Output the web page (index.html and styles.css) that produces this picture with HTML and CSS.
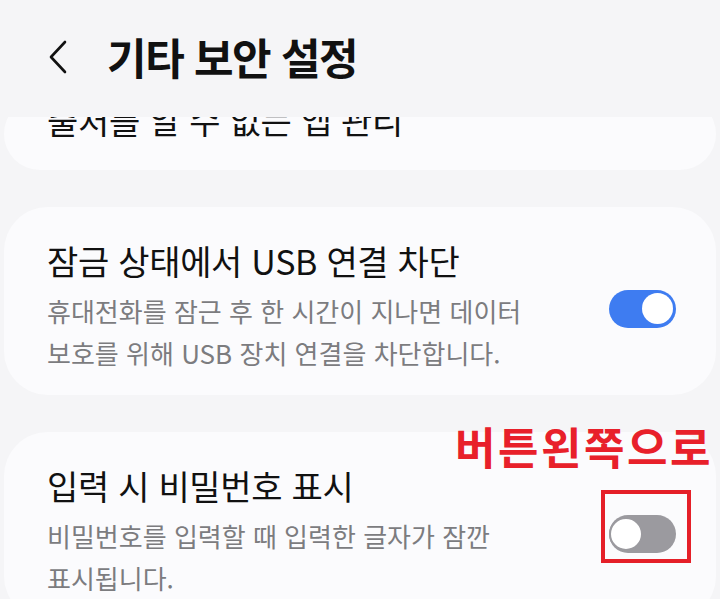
FILE: index.html
```html
<!DOCTYPE html>
<html lang="ko">
<head>
<meta charset="utf-8">
<title>기타 보안 설정</title>
<link rel="stylesheet" href="styles.css">
</head>
<body>
<div class="screen">
  <header class="appbar">
    <svg class="back" width="20" height="34" viewBox="0 0 20 34" aria-hidden="true">
      <path d="M17 2 L3 17 L17 32" fill="none" stroke="#111" stroke-width="2.6" stroke-linecap="round" stroke-linejoin="round"/>
    </svg>
    <h1 class="appbar-title">기타 보안 설정</h1>
  </header>
  <main class="list">
    <div class="peek">
      <section class="card card-peek">
        <div class="card-text">
          <div class="card-title">출처를 알 수 없는 앱 관리</div>
        </div>
      </section>
    </div>
    <section class="card">
      <div class="card-text">
        <div class="card-title">잠금 상태에서 USB 연결 차단</div>
        <div class="card-sub">휴대전화를 잠근 후 한 시간이 지나면 데이터 보호를 위해 USB 장치 연결을 차단합니다.</div>
      </div>
      <div class="switch switch-on"><span class="thumb"></span></div>
    </section>
    <section class="card">
      <div class="card-text">
        <div class="card-title">입력 시 비밀번호 표시</div>
        <div class="card-sub">비밀번호를 입력할 때 입력한 글자가 잠깐 표시됩니다.</div>
      </div>
      <div class="switch switch-off"><span class="thumb"></span></div>
    </section>
  </main>
  <div class="note">버튼왼쪽으로</div>
  <div class="highlight"></div>
</div>
</body>
</html>
```
FILE: styles.css
```css
html, body {
  margin: 0;
  padding: 0;
  background: #f5f5f7;
}
.screen {
  position: relative;
  width: 720px;
  height: 599px;
  overflow: hidden;
  background: #f5f5f7;
  font-family: "Noto Sans CJK KR", "Noto Sans", sans-serif;
  color: #111;
  word-break: keep-all;
}
.appbar {
  height: 117px;
  display: flex;
  align-items: center;
  padding-left: 48px;
  box-sizing: border-box;
}
.back {
  display: block;
  margin-top: -3px;
}
.appbar-title {
  margin: -4px 0 0 39px;
  font-size: 43px;
  font-weight: 700;
  letter-spacing: -1.4px;
  line-height: 1;
}
.list {
  display: flex;
  flex-direction: column;
  gap: 37px;
}
.peek {
  height: 53px;
  overflow: hidden;
  display: flex;
  flex-direction: column;
  justify-content: flex-end;
}
.card {
  margin: 0 4px;
  background: #fbfbfd;
  border-radius: 44px;
  display: flex;
  align-items: center;
  padding: 32px 40px 21px 43px;
}
.card-peek {
  flex: none;
  padding-top: 0;
  padding-bottom: 28px;
}
.card-text {
  flex: 1;
  max-width: 505px;
}
.card-title {
  font-size: 34px;
  line-height: 44px;
  letter-spacing: -0.3px;
  color: #111;
}
.card-sub {
  margin-top: 7px;
  font-size: 26px;
  line-height: 42px;
  letter-spacing: 0;
  color: #7c7c7f;
}
.switch {
  margin-left: auto;
  width: 67px;
  height: 38px;
  border-radius: 19px;
  box-sizing: border-box;
  display: flex;
  align-items: center;
  padding: 3px;
  margin-top: 4px;
}
.switch-on {
  background: #3e7cf1;
  justify-content: flex-end;
}
.switch-off {
  background: #9b9a9f;
  justify-content: flex-start;
  padding: 2px;
}
.thumb {
  width: 31px;
  height: 31px;
  border-radius: 50%;
  background: #fff;
}
.switch-off .thumb {
  width: 30px;
  height: 30px;
  border: 2px solid #9b9a9f;
  box-sizing: content-box;
  margin-left: -2px;
}
.note {
  position: absolute;
  left: 455px;
  top: 421px;
  font-size: 44px;
  font-weight: 700;
  line-height: 50px;
  color: #e8202a;
  letter-spacing: 2.5px;
}
.highlight {
  position: absolute;
  left: 601px;
  top: 490px;
  width: 90px;
  height: 73px;
  box-sizing: border-box;
  border: 4px solid #e51f28;
}
```
